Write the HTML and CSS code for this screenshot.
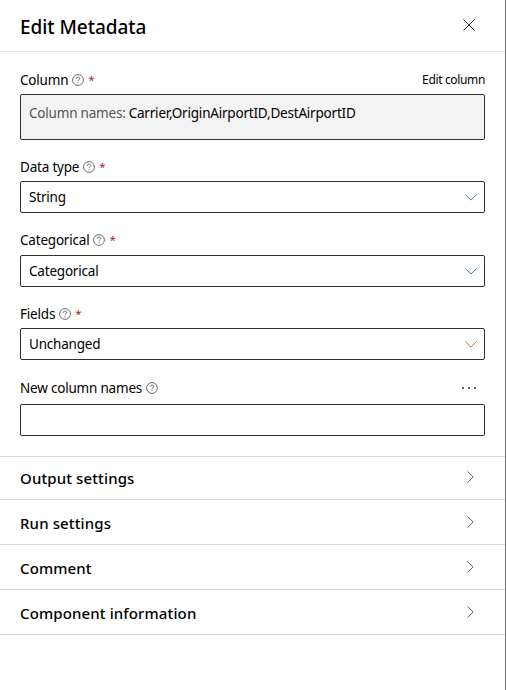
FILE: index.html
```html
<!DOCTYPE html>
<html lang="en">
<head>
<meta charset="utf-8">
<title>Edit Metadata</title>
<link rel="stylesheet" href="styles.css">
</head>
<body>
<svg class="defs" width="0" height="0" aria-hidden="true">
  <symbol id="help" viewBox="0 0 12 12"><circle cx="6" cy="6" r="5.4"/><path d="M4.3 4.8C4.3 2.6 7.7 2.6 7.7 4.6C7.7 5.8 6 5.8 6 7.2M6 8.2V9.2"/></symbol>
  <symbol id="down" viewBox="0 0 12 7"><path d="M.4 .5L6 6.1L11.6 .5"/></symbol>
  <symbol id="right" viewBox="0 0 7 12"><path d="M.5 .4L6.1 6L.5 11.6"/></symbol>
</svg>
<main class="panel">
  <header class="header">
    <h1>Edit Metadata</h1>
    <svg class="close" viewBox="0 0 12 12"><path d="M.4 .4L11.6 11.6M11.6 .4L.4 11.6"/></svg>
  </header>
  <form class="form">
    <div class="field column">
      <div class="label"><span>Column</span><svg class="help"><use href="#help"/></svg><b>*</b><a class="edit">Edit column</a></div>
      <div class="box summary"><span class="muted">Column names:</span><span class="names">Carrier,OriginAirportID,DestAirportID</span></div>
    </div>
    <div class="field type">
      <div class="label"><span>Data type</span><svg class="help"><use href="#help"/></svg><b>*</b></div>
      <div class="box"><span>String</span><svg class="down blue"><use href="#down"/></svg></div>
    </div>
    <div class="field category">
      <div class="label"><span>Categorical</span><svg class="help"><use href="#help"/></svg><b>*</b></div>
      <div class="box"><span>Categorical</span><svg class="down blue"><use href="#down"/></svg></div>
    </div>
    <div class="field fields">
      <div class="label"><span>Fields</span><svg class="help"><use href="#help"/></svg><b>*</b></div>
      <div class="box"><span>Unchanged</span><svg class="down amber"><use href="#down"/></svg></div>
    </div>
    <div class="field rename">
      <div class="label"><span>New column names</span><svg class="help"><use href="#help"/></svg><svg class="more" viewBox="0 0 16 2"><path d="M1 0h2v2H1zM7 0h2v2H7zM13 0h2v2h-2z"/></svg></div>
      <div class="box"></div>
    </div>
  </form>
  <nav class="sections">
    <div class="section"><span class="output">Output settings</span><svg class="right"><use href="#right"/></svg></div>
    <div class="section"><span class="run">Run settings</span><svg class="right"><use href="#right"/></svg></div>
    <div class="section"><span class="comment">Comment</span><svg class="right"><use href="#right"/></svg></div>
    <div class="section"><span class="info">Component information</span><svg class="right"><use href="#right"/></svg></div>
  </nav>
</main>
</body>
</html>
```
FILE: styles.css
```css
* { box-sizing: border-box; }
body { margin: 0; background: #fff; color: #000; font-family: "Noto Sans", "Open Sans", sans-serif; font-size: 13.5px; letter-spacing: -.2px; }
svg { display: block; fill: none; stroke: #323130; flex: none; }
.defs { position: absolute; }
.panel { height: 690px; border-right: 1px solid #777; }
.header { display: flex; align-items: center; justify-content: space-between; height: 52px; padding: 0 30px 0 20px; border-bottom: 1px solid #e5e5e5; }
h1 { margin: 3px 0 0; font-size: 19px; font-weight: 500; line-height: 26px; letter-spacing: -.05px; }
.close { width: 12px; height: 12px; margin-bottom: 1px; }
.form { padding: 18px 20px 20px; }
.field { display: flex; flex-direction: column; }
.label { display: flex; align-items: center; height: 20px; margin-bottom: 4px; line-height: 20px; white-space: nowrap; }
.label b { margin-left: 4px; color: #a4262c; font-weight: 400; font-size: 11.5px; }
.help { width: 12px; height: 12px; margin-left: 4px; stroke: #605e5c; stroke-width: .9; }
.edit { margin-left: auto; font-size: 12px; letter-spacing: -.35px; }
.box { display: flex; align-items: center; height: 32px; padding: 0 7px 0 8px; border: 1px solid #323130; border-radius: 2px; line-height: 20px; white-space: nowrap; }
.summary { height: 46px; padding-bottom: 8px; background: #f3f3f3; }
.muted { margin-right: 3px; color: #555; }
.down { width: 12px; height: 7px; margin-left: auto; }
.blue { stroke: #3f83b8; }
.amber { stroke: #ad7540; }
.type { margin-top: 17px; }
.category { margin-top: 17px; }
.category .label { margin-bottom: 5px; }
.fields { margin-top: 17px; }
.rename { margin-top: 18px; }
.rename .label { margin-bottom: 6px; }
.more { width: 16px; height: 2px; margin: 0 8px 0 auto; fill: #8a6446; stroke: none; }
.sections { border-top: 1px solid #d6d6d6; }
.section { display: flex; align-items: center; justify-content: space-between; height: 45px; padding: 2px 31px 0 20px; border-bottom: 1px solid #d6d6d6; font-size: 15px; font-weight: 500; letter-spacing: .12px; }
.section:first-child { height: 43px; padding-top: 0; }
.right { width: 7px; height: 12px; margin-bottom: 3px; stroke: #5c5d78; }
```
